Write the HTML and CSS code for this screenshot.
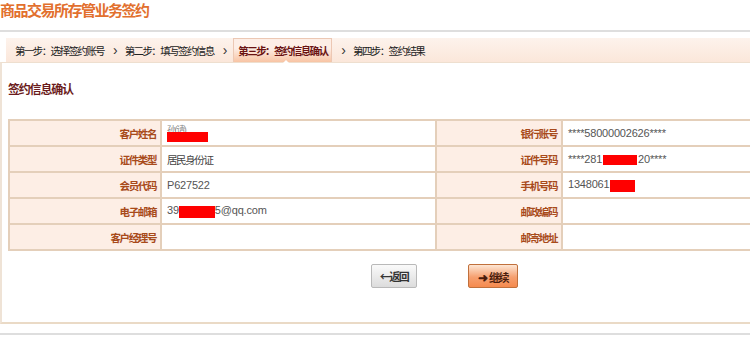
FILE: index.html
```html
<!DOCTYPE html>
<html lang="zh-CN">
<head>
    <meta charset="UTF-8">
    <meta name="viewport" content="width=device-width, initial-scale=1.0">
    <title>商品交易所存管业务签约</title>
    <link rel="stylesheet" href="styles.css">
</head>
<body>
    <h1 class="page-title">商品交易所存管业务签约</h1>

    <ul class="steps">
        <li>第一步：选择签约账号</li>
        <li class="sep">&#8250;</li>
        <li>第二步：填写签约信息</li>
        <li class="sep">&#8250;</li>
        <li class="on">第三步：签约信息确认</li>
        <li class="sep">&#8250;</li>
        <li>第四步：签约结果</li>
    </ul>

    <div class="panel">
        <h2 class="panel-title">签约信息确认</h2>

        <table class="info">
            <colgroup>
                <col class="c-label1">
                <col class="c-value1">
                <col class="c-label2">
                <col class="c-value2">
            </colgroup>
            <tr>
                <th>客户姓名</th>
                <td><span class="mask-wrap"><span class="faint">孙(请)</span><i class="mask m-name"></i></span></td>
                <th>银行账号</th>
                <td class="num">****58000002626****</td>
            </tr>
            <tr>
                <th>证件类型</th>
                <td>居民身份证</td>
                <th>证件号码</th>
                <td class="num">****281<i class="mask m-id"></i>20****</td>
            </tr>
            <tr>
                <th>会员代码</th>
                <td class="num">P627522</td>
                <th>手机号码</th>
                <td class="num">1348061<i class="mask m-phone"></i></td>
            </tr>
            <tr>
                <th>电子邮箱</th>
                <td class="num">39<i class="mask m-mail"></i>5@qq.com</td>
                <th>邮政编码</th>
                <td></td>
            </tr>
            <tr>
                <th>客户经理号</th>
                <td></td>
                <th>邮寄地址</th>
                <td></td>
            </tr>
        </table>

        <div class="actions">
            <button class="btn btn-back">&#8592;返回</button>
            <button class="btn btn-next"><b>&#10140;</b> 继续</button>
        </div>
    </div><!-- .panel END -->

    <div class="foot-line"></div>
</body>
</html>
```

FILE: styles.css
```css
* {
    margin: 0;
    padding: 0;
    box-sizing: border-box;
}
body {
    width: 750px;
    overflow: hidden;
    background: #fff;
    font-family: "Liberation Sans", "Noto Sans CJK SC", sans-serif;
    color: #333;
}

/* 상단 제목 */
.page-title {
    height: 32px;
    padding-top: 1px;
    font-size: 15px;
    line-height: 20px;
    letter-spacing: -1.5px;
    font-weight: bold;
    color: #e2702e;
    border-bottom: 2px solid #dedede;
}

/* 단계 표시 */
.steps {
    list-style: none;
    display: flex;
    align-items: stretch;
    height: 24px;
    margin: 6px 0 0 6px;
    padding-left: 9px;
    background: linear-gradient(to bottom, #fdf3ec, #fbe7da);
    font-size: 10.5px;
    letter-spacing: -1.6px;
    color: #222;
}
.steps li {
    display: flex;
    align-items: center;
}
.steps .sep {
    padding: 0 7px 0 9px;
    font-size: 14px;
    letter-spacing: 0;
    color: #333;
}
.steps .on {
    margin-left: -1px;
    padding: 0 4px;
    border: 1px solid #ecc8b4;
    border-bottom: 0;
    background: linear-gradient(to bottom, #fdeee6 40%, #f8c4a4);
    color: #6a1212;
    font-weight: bold;
    position: relative;
}
.steps .on::after {
    content: '';
    position: absolute;
    left: 50%;
    bottom: -1px;
    border: 3px solid transparent;
    border-bottom-color: #fff;
}

/* 내용 박스 */
.panel {
    height: 262px;
    border-top: 1px solid #eedfcf;
    border-left: 2px solid #efe3d6;
    border-bottom: 2px solid #eadac6;
    padding: 20px 0 0 6px;
}
.panel-title {
    font-size: 12px;
    line-height: 14px;
    letter-spacing: -1.2px;
    font-weight: bold;
    color: #6b1c1c;
}

.info {
    width: 754px;
    margin-top: 22px;
    table-layout: fixed;
    border-collapse: collapse;
    border: 2px solid #e4cfba;
    border-right: 0;
}
.c-label1 { width: 152px; }
.c-value1 { width: 275px; }
.c-label2 { width: 126px; }
.c-value2 { width: 201px; }
.info tr {
    height: 26px;
}
.info th,
.info td {
    border: 2px solid #e4cfba;
    font-size: 10.5px;
    letter-spacing: -1.4px;
    white-space: nowrap;
}
.info th {
    background: #fdeee5;
    text-align: right;
    padding-right: 4px;
    color: #a84a1a;
    font-weight: bold;
}
.info td {
    text-align: left;
    padding-left: 5px;
    color: #444;
    background: #fff;
}
.info td.num {
    font-size: 11px;
    letter-spacing: -0.2px;
    color: #555;
}

/* 가림 처리 */
.mask {
    display: inline-block;
    background: #ff0000;
    vertical-align: middle;
}
.mask-wrap {
    position: relative;
    display: inline-block;
}
.faint {
    color: #888;
    font-size: 9px;
    position: relative;
    top: -4px;
}
.m-name {
    position: absolute;
    left: 0;
    top: 5px;
    width: 41px;
    height: 10px;
}
.m-id { width: 34px; height: 10px; margin: 0 1px; }
.m-phone { width: 25px; height: 12px; margin-left: 1px; }
.m-mail { width: 36px; height: 12px; }

/* 버튼 */
.actions {
    display: flex;
    gap: 51px;
    margin-top: 13px;
    padding-left: 363px;
}
.btn {
    height: 24px;
    border-radius: 2px;
    font-family: "Noto Sans CJK SC", sans-serif;
    font-size: 11px;
    font-weight: bold;
    letter-spacing: -1.5px;
    cursor: pointer;
}
.btn-back {
    width: 46px;
    border: 1px solid #b9b9b9;
    background: linear-gradient(to bottom, #fafafa, #dcdcdc);
    color: #333;
}
.btn-next {
    width: 50px;
    border: 1px solid #c0703c;
    background: linear-gradient(to bottom, #fde6d4, #f6a070 55%, #f58a4e);
    color: #4a1c0c;
}
.btn-next b {
    letter-spacing: 0;
    font-size: 12px;
}

.foot-line {
    margin-top: 9px;
    height: 2px;
    background: #dedede;
}
```
